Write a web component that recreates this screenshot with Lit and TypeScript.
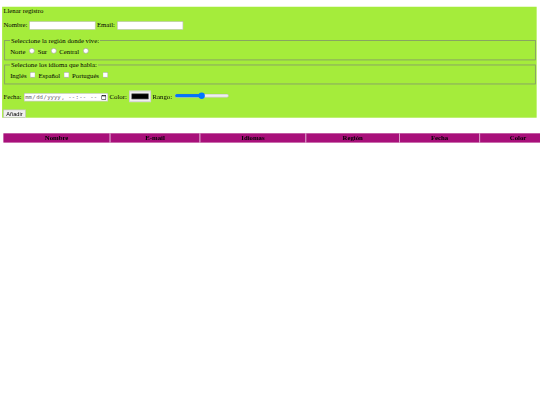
import { LitElement, html, css } from "lit";
import { customElement } from "lit/decorators.js";

@customElement("app-root")
export class AppRoot extends LitElement {
  static styles = css`
    :host { display: block; overflow: hidden; height: 405px; background: #fff; }
    .page { transform: scale(0.4219); transform-origin: 0 0; width: 1280px; box-sizing: border-box; padding: 16px 8px 0 8px; font-family: "Liberation Serif", serif; font-size: 16px; color: #000; }
    form { margin-left: -3px; padding-left: 3px; background: #a5ec3b; }
    p { margin: 16px 0; }
    p.title { margin: 0 0 17px; }
    p.names { margin-bottom: 17px; }
    p.misc { margin: 15px 0 18px; }
    fieldset { margin: 0 2px 2px; border: 2px solid #84996a; }
    input[type=text] { width: 156px; box-sizing: border-box; border: 1px solid #aaa; margin-left: 1px; }
    input[type=datetime-local] { width: 199px; box-sizing: border-box; border: 1px solid #aaa; color: #666; margin-left: 2px; }
    input[type=color] { width: 52px; border: 2px solid #cfcfcf; margin-left: 1px; }
    button { display: block; border: 1px solid #aaa; }
    .action { margin: 14px 0 0; }
    table { margin-top: 37px; border-collapse: separate; border-spacing: 0; table-layout: fixed; width: 1310px; }
    th { box-sizing: border-box; background: #a8107a; height: 22px; padding: 0; border-left: 2px solid #e4b7d6; font-weight: bold; text-align: center; }
    th:first-child { border-left: 0; }
    .c1 { width: 252px; } .c2 { width: 213px; } .c3 { width: 251px; } .c4 { width: 222px; } .c5 { width: 190px; } .c6 { width: 182px; }
  `;

  render() {
    return html`
      <div class="page">
        <form @submit=${(e: Event) => e.preventDefault()}>
          <p class="title">Llenar registro</p>
          <p class="names">Nombre: <input type="text" /> Email: <input type="text" /></p>
          <fieldset>
            <legend>Seleccione la región donde vive:</legend>
            Norte <input type="radio" name="r" />
            Sur <input type="radio" name="r" />
            Central <input type="radio" name="r" />
          </fieldset>
          <fieldset>
            <legend>Selecione los idioma que habla:</legend>
            Inglés <input type="checkbox" />
            Español <input type="checkbox" />
            Portugués <input type="checkbox" />
          </fieldset>
          <p class="misc">
            Fecha: <input type="datetime-local" />
            Color: <input type="color" value="#000000" />
            Rango: <input type="range" />
          </p>
          <div class="action"><button type="button">Añadir</button></div>
        </form>
        <table>
          <thead>
            <tr>
              <th class="c1">Nombre</th>
              <th class="c2">E-mail</th>
              <th class="c3">Idiomas</th>
              <th class="c4">Región</th>
              <th class="c5">Fecha</th>
              <th class="c6">Color</th>
            </tr>
          </thead>
        </table>
      </div>
    `;
  }
}
